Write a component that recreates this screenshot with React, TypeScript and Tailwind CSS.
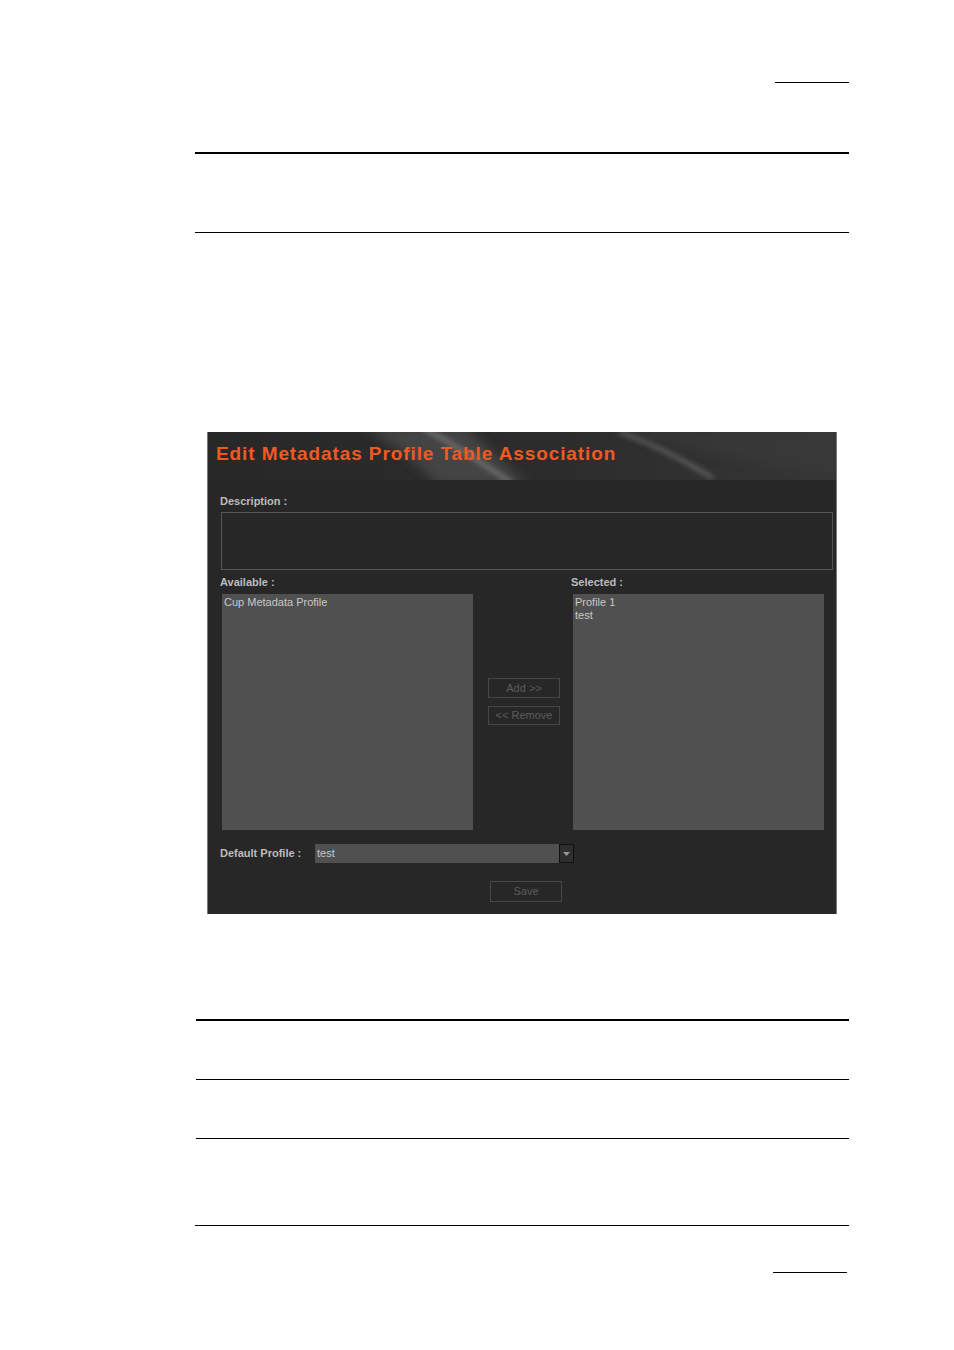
import React from "react";

const font = { fontFamily: '"Liberation Sans", Arial, sans-serif' };

function Header() {
  return (
    <div className="relative h-[48px] overflow-hidden bg-[#2b2b2b]">
      <svg className="absolute inset-0" width="629" height="48" viewBox="0 0 629 48">
        <defs>
          <linearGradient id="bg" x1="0" y1="0" x2="1" y2="0">
            <stop offset="0" stopColor="#282828" />
            <stop offset="0.55" stopColor="#2c2c2c" />
            <stop offset="1" stopColor="#363636" />
          </linearGradient>
          <filter id="blur" x="-50%" y="-50%" width="200%" height="200%">
            <feGaussianBlur stdDeviation="6" />
          </filter>
          <filter id="blur2" x="-50%" y="-50%" width="200%" height="200%">
            <feGaussianBlur stdDeviation="2.5" />
          </filter>
        </defs>
        <rect width="629" height="48" fill="url(#bg)" />
        <path d="M155 -6 L 255 -6 C 280 15, 300 35, 320 54 L 230 54 C 210 30, 185 12, 155 -6 Z" fill="#4a4a4a" filter="url(#blur)" opacity="0.85" />
        <path d="M215 -4 C 250 14, 275 32, 305 52" stroke="#6c6c6c" strokeWidth="5" fill="none" filter="url(#blur2)" />
        <path d="M412 0 C 445 12, 470 25, 505 46" stroke="#5e5e5e" strokeWidth="4" fill="none" filter="url(#blur2)" />
        <path d="M400 -5 C 460 10, 520 28, 629 44 L 629 -5 Z" fill="#3a3a3a" filter="url(#blur)" opacity="0.6" />
      </svg>
      <div
        className="relative pl-[8px] pt-[11px] text-[19px] font-bold leading-[22px] tracking-[0.9px] text-[#f05a22]"
        style={{ fontFamily: '"Liberation Sans", Arial, sans-serif' }}
      >
        Edit Metadatas Profile Table Association
      </div>
    </div>
  );
}

function Btn({ label, h }: { label: string; h: string }) {
  return (
    <div
      className={`flex ${h} w-[72px] items-center justify-center border border-[#474747] text-[11px] text-[#5c5c5c]`}
    >
      {label}
    </div>
  );
}

export default function App() {
  return (
    <div className="min-h-[1350px] w-[954px] bg-white" style={font}>
      <div className="pt-[82px]">
        <div className="ml-[775px] w-[74px] border-t border-black" />
      </div>
      <div className="ml-[195px] mt-[69px] w-[654px] border-t-2 border-black" />
      <div className="ml-[195px] mt-[78px] w-[654px] border-t border-black" />

      <div className="ml-[207px] mt-[199px] h-[482px] w-[630px] border-l border-r border-[#7a7a7a] bg-[#272727]">
        <Header />
        <div className="px-[12px]">
          <div className="pt-[15px] text-[11px] font-bold leading-[13px] text-[#bdbdbd]">Description :</div>
          <div className="ml-[1px] mt-[4px] h-[58px] w-[612px] border border-[#555]" />
          <div className="mt-[6px] flex">
            <div className="w-[351px]">
              <div className="text-[11px] font-bold leading-[13px] text-[#bdbdbd]">Available :</div>
              <div className="ml-[2px] mt-[5px] h-[236px] w-[251px] bg-[#505050] px-[2px] pt-[2px] text-[11px] leading-[13px] text-[#c8c8c8]">
                Cup Metadata Profile
              </div>
            </div>
            <div>
              <div className="text-[11px] font-bold leading-[13px] text-[#bdbdbd]">Selected :</div>
              <div className="ml-[2px] mt-[5px] h-[236px] w-[251px] bg-[#505050] px-[2px] pt-[2px] text-[11px] leading-[13px] text-[#c8c8c8]">
                <div>Profile 1</div>
                <div>test</div>
              </div>
            </div>
          </div>
        </div>
        <div className="relative">
          <div className="absolute left-[280px] top-[-152px] flex flex-col gap-[8px]">
            <Btn label="Add >>" h="h-[20px]" />
            <Btn label="<< Remove" h="h-[19px]" />
          </div>
        </div>
        <div className="mt-[14px] flex items-center px-[12px]">
          <div className="w-[95px] text-[11px] font-bold leading-[13px] text-[#bdbdbd]">Default Profile :</div>
          <div className="flex h-[19px]">
            <div className="w-[244px] bg-[#505050] pl-[2px] pt-[3px] text-[11px] leading-[13px] text-[#c8c8c8]">test</div>
            <div className="flex h-[19px] w-[15px] items-center justify-center border border-[#111] bg-[#2e2e2e]">
              <svg width="7" height="4" viewBox="0 0 7 4">
                <path d="M0 0 H7 L3.5 4 Z" fill="#9a9a9a" />
              </svg>
            </div>
          </div>
        </div>
        <div className="ml-[282px] mt-[18px]">
          <Btn label="Save" h="h-[21px]" />
        </div>
      </div>

      <div className="ml-[196px] mt-[105px] w-[653px] border-t-2 border-black" />
      <div className="ml-[196px] mt-[58px] w-[653px] border-t border-black" />
      <div className="ml-[196px] mt-[58px] w-[653px] border-t border-black" />
      <div className="ml-[195px] mt-[86px] w-[654px] border-t border-black" />
      <div className="ml-[773px] mt-[46px] w-[74px] border-t border-black" />
    </div>
  );
}
